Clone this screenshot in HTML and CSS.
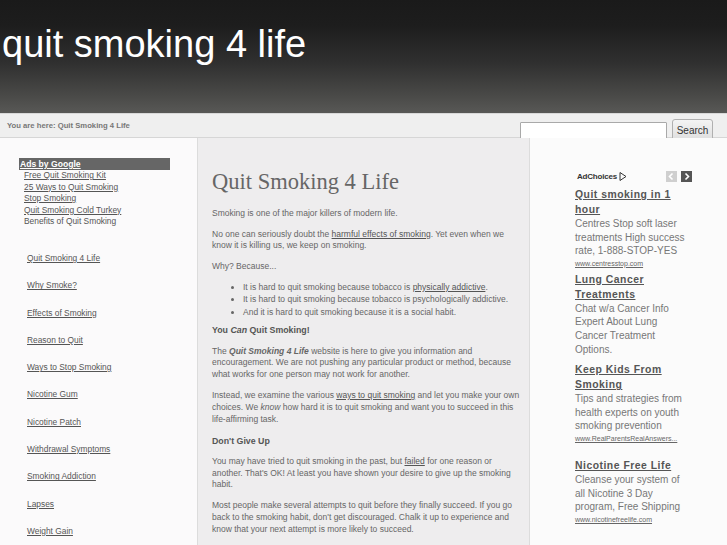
FILE: index.html
```html
<!DOCTYPE html>
<html>
<head>
<meta charset="utf-8">
<title>Quit Smoking 4 Life</title>
<link rel="stylesheet" href="styles.css">
</head>
<body>
<header class="masthead">
  <h1 class="site-title">quit smoking 4 life</h1>
</header>
<div class="crumbbar">
  <div class="crumb">You are here: Quit Smoking 4 Life</div>
  <form class="search">
    <input class="search-input" type="text">
    <button class="search-btn" type="button">Search</button>
  </form>
</div>
<div class="columns">
  <aside class="leftcol">
    <div class="adlinks">
      <div class="adlinks-head">Ads by Google</div>
      <a class="adlink" href="#">Free Quit Smoking Kit</a>
      <a class="adlink" href="#">25 Ways to Quit Smoking</a>
      <a class="adlink" href="#">Stop Smoking</a>
      <a class="adlink" href="#">Quit Smoking Cold Turkey</a>
      <span class="adlink plain">Benefits of Quit Smoking</span>
    </div>
    <ul class="nav">
      <li><a href="#">Quit Smoking 4 Life</a></li>
      <li><a href="#">Why Smoke?</a></li>
      <li><a href="#">Effects of Smoking</a></li>
      <li><a href="#">Reason to Quit</a></li>
      <li><a href="#">Ways to Stop Smoking</a></li>
      <li><a href="#">Nicotine Gum</a></li>
      <li><a href="#">Nicotine Patch</a></li>
      <li><a href="#">Withdrawal Symptoms</a></li>
      <li><a href="#">Smoking Addiction</a></li>
      <li><a href="#">Lapses</a></li>
      <li><a href="#">Weight Gain</a></li>
    </ul>
  </aside>
  <main class="content">
    <h2 class="page-title">Quit Smoking 4 Life</h2>
    <p>Smoking is one of the major killers of modern life.</p>
    <p>No one can seriously doubt the <a href="#">harmful effects of smoking</a>. Yet even when we know it is killing us, we keep on smoking.</p>
    <p>Why? Because...</p>
    <ul class="bullets">
      <li>It is hard to quit smoking because tobacco is <a href="#">physically addictive</a>.</li>
      <li>It is hard to quit smoking because tobacco is psychologically addictive.</li>
      <li>And it is hard to quit smoking because it is a social habit.</li>
    </ul>
    <p class="sub"><strong>You <em>Can</em> Quit Smoking!</strong></p>
    <p>The <strong><em>Quit Smoking 4 Life</em></strong> website is here to give you information and encouragement. We are not pushing any particular product or method, because what works for one person may not work for another.</p>
    <p>Instead, we examine the various <a href="#">ways to quit smoking</a> and let you make your own choices. We <em>know</em> how hard it is to quit smoking and want you to succeed in this life-affirming task.</p>
    <p class="sub"><strong>Don't Give Up</strong></p>
    <p>You may have tried to quit smoking in the past, but <a href="#">failed</a> for one reason or another. That's OK! At least you have shown your desire to give up the smoking habit.</p>
    <p>Most people make several attempts to quit before they finally succeed. If you go back to the smoking habit, don't get discouraged. Chalk it up to experience and know that your next attempt is more likely to succeed.</p>
  </main>
  <aside class="rightcol">
    <div class="adbox">
      <div class="adchoices-row">
        <span class="adchoices">AdChoices <svg class="ac-icon" width="8" height="9" viewBox="0 0 8 9"><path d="M1 0.5 L1 8.5 L7 4.5 Z" fill="none" stroke="#333" stroke-width="1"/></svg></span>
        <span class="arrows">
          <span class="arrow off"><svg width="11" height="11" viewBox="0 0 11 11"><path d="M6.5 2.5 L3.5 5.5 L6.5 8.5" fill="none" stroke="#fff" stroke-width="1.6"/></svg></span>
          <span class="arrow on"><svg width="11" height="11" viewBox="0 0 11 11"><path d="M4.5 2.5 L7.5 5.5 L4.5 8.5" fill="none" stroke="#fff" stroke-width="1.6"/></svg></span>
        </span>
      </div>
      <div class="ad">
        <a class="ad-title" href="#">Quit smoking in 1 hour</a>
        <div class="ad-desc">Centres Stop soft laser treatments High success rate, 1-888-STOP-YES</div>
        <a class="ad-url" href="#">www.centresstop.com</a>
      </div>
      <div class="ad nourl">
        <a class="ad-title" href="#">Lung Cancer Treatments</a>
        <div class="ad-desc">Chat w/a Cancer Info Expert About Lung Cancer Treatment Options.</div>
      </div>
      <div class="ad">
        <a class="ad-title" href="#">Keep Kids From Smoking</a>
        <div class="ad-desc">Tips and strategies from health experts on youth smoking prevention</div>
        <a class="ad-url" href="#">www.RealParentsRealAnswers...</a>
      </div>
      <div class="ad last">
        <a class="ad-title" href="#">Nicotine Free Life</a>
        <div class="ad-desc">Cleanse your system of all Nicotine 3 Day program, Free Shipping</div>
        <a class="ad-url" href="#">www.nicotinefreelife.com</a>
      </div>
    </div>
  </aside>
</div>
</body>
</html>
```
FILE: styles.css
```css
html, body {
  margin: 0;
  padding: 0;
}
body {
  font-family: "Liberation Sans", Arial, sans-serif;
  color: #666;
  background: #fbfafb;
  overflow: hidden;
}
a { color: #555; }

.masthead {
  height: 113px;
  background: linear-gradient(180deg, #1a1a1a 0%, #1d1d1d 22%, #2f2f2f 55%, #4a4a48 85%, #585856 100%);
  box-sizing: border-box;
  padding: 23px 0 0 2px;
}
.site-title {
  margin: 0;
  font-weight: normal;
  font-size: 38px;
  color: #fff;
  letter-spacing: 0;
}

.crumbbar {
  height: 25px;
  box-sizing: border-box;
  background: #efefef;
  border-top: 1px solid #d8d8d8;
  border-bottom: 1px solid #d6d6d6;
  display: flex;
  align-items: center;
  justify-content: space-between;
  padding: 0 14px 0 7px;
}
.crumb {
  font-size: 7.7px;
  font-weight: bold;
  color: #777;
}
.search {
  display: flex;
  align-items: center;
  gap: 5px;
  margin: 5px 0 0 0;
  align-self: flex-start;
}
.search-input {
  width: 147px;
  height: 17px;
  box-sizing: border-box;
  border: 1px solid #a9a9a9;
  border-radius: 1px;
  background: #fff;
  margin: 0;
  padding: 0;
}
.search-btn {
  width: 41px;
  height: 22px;
  box-sizing: border-box;
  border: 1px solid #b0b0b0;
  border-radius: 3px;
  background: linear-gradient(#f4f4f4, #dedede);
  font-family: "Liberation Sans", Arial, sans-serif;
  font-size: 10px;
  color: #333;
  padding: 0;
  margin: 0;
}

.columns {
  display: flex;
  align-items: stretch;
  min-height: 420px;
}
.leftcol {
  width: 197px;
  flex: none;
  background: #fbfafb;
  padding-top: 20px;
}
.adlinks {
  margin-left: 19px;
  height: 70px;
  overflow: hidden;
  font-size: 8.4px;
}
.adlinks-head {
  width: 151px;
  height: 12px;
  line-height: 12px;
  background: #666;
  color: #fff;
  font-weight: bold;
  font-size: 8.6px;
  text-decoration: underline;
  padding-left: 1px;
  box-sizing: border-box;
}
.adlink {
  display: block;
  margin-left: 5px;
  line-height: 11.5px;
  color: #555;
}
.adlink.plain { text-decoration: none; }

.nav {
  list-style: none;
  margin: 17px 0 0 0;
  padding: 0 0 0 27px;
}
.nav li {
  height: 27.3px;
  line-height: 27.3px;
  font-size: 8.4px;
}
.nav a { color: #555; }

.content {
  width: 333px;
  flex: none;
  box-sizing: border-box;
  background: #eeedee;
  border-left: 1px solid #dcdcdc;
  border-right: 1px solid #dcdcdc;
  padding: 38px 8px 0 14px;
  font-size: 8.5px;
  line-height: 11.7px;
  color: #666;
}
.page-title {
  margin: 0 0 20px 0;
  font-family: "Liberation Serif", "Times New Roman", serif;
  font-weight: normal;
  font-size: 22.5px;
  color: #666;
}
.content p {
  margin: 0 0 9.3px 0;
}
.content .sub {
  font-size: 8.8px;
  line-height: 12px;
  color: #555;
}
.content a { color: #555; }
.bullets {
  margin: -1.5px 0 6px 0;
  padding-left: 31px;
}
.bullets li {
  line-height: 12.5px;
}

.rightcol {
  flex: 1;
  background: #fbfbfb;
  padding: 33px 0 0 45px;
}
.adbox { width: 114px; }
.adchoices-row {
  display: flex;
  align-items: center;
  justify-content: space-between;
  width: 117px;
  height: 11px;
  padding-left: 2px;
  box-sizing: border-box;
  margin-bottom: 5px;
}
.adchoices {
  display: flex;
  align-items: center;
  gap: 2px;
  font-size: 8px;
  font-weight: bold;
  color: #333;
  letter-spacing: -0.2px;
}
.arrows { display: flex; gap: 4px; }
.arrow { width: 11px; height: 11px; display: block; }
.arrow svg { display: block; }
.arrow.off { background: #cfcfcf; }
.arrow.on { background: #555; }

.ad { margin-bottom: 3px; }
.ad.nourl { margin-bottom: 6px; }
.ad.last { margin-top: 14px; }
.ad-title {
  display: block;
  font-size: 10.4px;
  font-weight: bold;
  line-height: 15px;
  color: #555;
  letter-spacing: 0.5px;
}
.ad-desc {
  font-size: 10px;
  line-height: 13.6px;
  color: #777;
  letter-spacing: 0;
}
.ad-url {
  display: block;
  font-size: 7px;
  line-height: 11px;
  color: #666;
  white-space: nowrap;
}
```
